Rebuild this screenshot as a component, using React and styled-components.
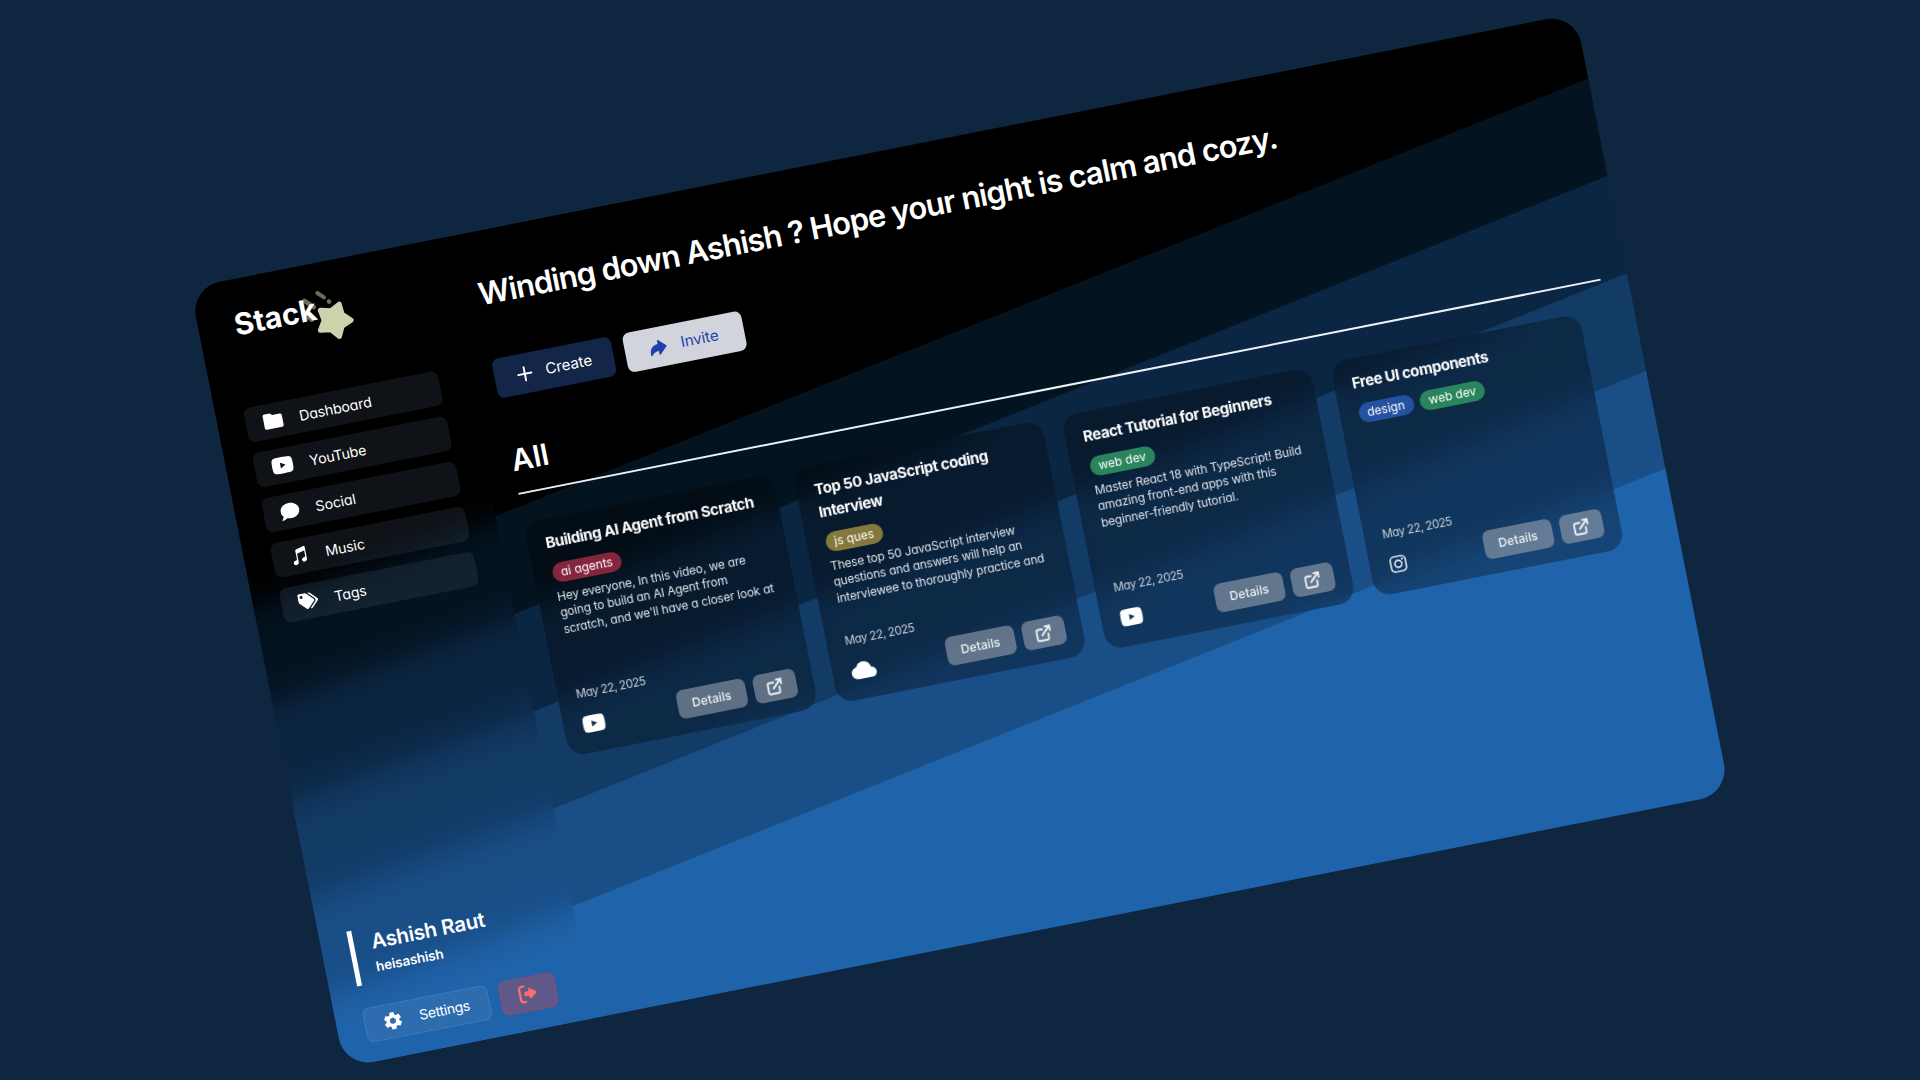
import React from "react";
import styled, { createGlobalStyle } from "styled-components";
import {
  IoMusicalNotes,
  IoArrowRedo,
  IoCloud,
  IoLogoInstagram,
} from "react-icons/io5";
import { IoMdSettings } from "react-icons/io";
import { FaTags, FaComment } from "react-icons/fa";
import { FiExternalLink, FiPlus } from "react-icons/fi";
import { MdFolder } from "react-icons/md";

const display = `"Inter", "Liberation Sans", sans-serif`;
const body = `"Inter", "Open Sans", sans-serif`;

const bands = [
  [0, 0, 0],
  [4, 19, 32],
  [11, 38, 67],
  [18, 59, 102],
  [25, 78, 135],
  [31, 99, 170],
];

const mix = (a, b, t) =>
  `rgb(${a.map((v, i) => Math.round(v + (b[i] - v) * t)).join(",")})`;

// Each band edge becomes a run of stops: [distance from the edge, share of the next band].
const bandGradient = (angle, first, step, falloff) =>
  `linear-gradient(${angle}deg, ${bands
    .slice(1)
    .flatMap((color, i) =>
      falloff.map(
        ([offset, share]) =>
          `${mix(bands[i], color, share)} ${(first + i * step + offset).toFixed(1)}px`
      )
    )
    .join(", ")})`;

const sharp = [
  [-0.5, 0],
  [0.5, 1],
];
const soft = [
  [-34, 0],
  [-24, 0.05],
  [-14, 0.17],
  [-7, 0.32],
  [0, 0.5],
  [7, 0.68],
  [14, 0.83],
  [24, 0.95],
  [34, 1],
];

const GlobalStyle = createGlobalStyle`
  * { box-sizing: border-box; margin: 0; padding: 0; }
  body {
    background: #0e2640;
    color: #fff;
    overflow: hidden;
    font-family: ${body};
    font-feature-settings: "cv11";
  }
  button { font-feature-settings: inherit; white-space: nowrap; }
`;

const Stage = styled.div`
  width: 100vw;
  height: 100vh;
  display: flex;
  align-items: center;
  justify-content: center;
  overflow: hidden;
`;

const Panel = styled.div`
  flex: none;
  display: flex;
  width: 1412px;
  height: 795px;
  border-radius: 30px;
  overflow: hidden;
  transform: rotate(-11.2deg);
  background: ${bandGradient(169.37, 325.6, 97.7, sharp)};
`;

const Sidebar = styled.aside`
  flex: none;
  display: flex;
  flex-direction: column;
  width: 255px;
  padding: 26px 29.5px 19px 28px;
  background: ${bandGradient(171.3, 323, 98.2, soft)};
`;

const Logo = styled.div`
  position: relative;
  height: 40px;
  margin-bottom: 63px;
`;

const LogoText = styled.span`
  position: relative;
  margin-left: 8px;
  font: 700 30px/38px ${display};
  letter-spacing: 0;
`;

const LogoStar = styled.svg`
  position: absolute;
  left: 67px;
  top: -6px;
  width: 66px;
  height: 66px;
`;

const Nav = styled.nav`
  display: flex;
  flex-direction: column;
  gap: 10.9px;
`;

const NavItem = styled.a`
  display: flex;
  align-items: center;
  gap: 16.5px;
  height: 35px;
  padding-left: 17px;
  border-radius: 7px;
  background: rgba(100, 120, 150, 0.15);
  font-size: 14.2px;
  letter-spacing: -0.1px;
`;

const FolderIcon = styled(MdFolder)`
  width: 23px;
  height: 23px;
  margin: 0 -1px 0 -1.5px;
`;

const Profile = styled.div`
  margin-top: auto;
  margin-bottom: 23px;
  height: 56px;
  padding: 1.5px 0 0 17.5px;
  border-left: 5px solid #fff;
`;

const ProfileName = styled.div`
  font: 600 20.5px/28px ${display};
  letter-spacing: -0.2px;
`;

const ProfileHandle = styled.div`
  font: 600 13.5px/22px ${display};
  letter-spacing: -0.15px;
`;

const SidebarFooter = styled.div`
  display: flex;
  gap: 10.5px;
`;

const SettingsButton = styled.button`
  display: flex;
  align-items: center;
  gap: 16.5px;
  flex: none;
  width: 127px;
  height: 35.5px;
  padding-left: 17px;
  border: 1px solid rgba(110, 160, 220, 0.3);
  border-radius: 7px;
  background: rgba(255, 255, 255, 0.06);
  color: #fff;
  font: 400 14px/20px ${body};
  letter-spacing: -0.3px;
`;

const LogoutButton = styled.button`
  display: flex;
  align-items: center;
  justify-content: center;
  flex: none;
  width: 57.5px;
  height: 35.5px;
  border: 1px solid rgba(200, 60, 85, 0.55);
  border-radius: 7px;
  background: #5e5989;
  color: #ff6b6b;
`;

const Main = styled.main`
  flex: 1;
  min-width: 0;
  display: flex;
  flex-direction: column;
  padding: 42.5px 27.5px 0 26.5px;
`;

const Greeting = styled.h1`
  font: 600 31px/40px ${display};
  letter-spacing: -0.9px;
  white-space: nowrap;
`;

const Actions = styled.div`
  display: flex;
  gap: 12.5px;
  margin: 46.5px 0 0 -0.5px;
`;

const ActionButton = styled.button`
  display: flex;
  align-items: center;
  justify-content: center;
  gap: ${(p) => (p.$light ? 13 : 10)}px;
  width: 120.5px;
  height: 40px;
  padding-right: 3px;
  border: 0;
  border-radius: 7px;
  background: ${(p) => (p.$light ? "#d1d5db" : "#132548")};
  color: ${(p) => (p.$light ? "#1e40af" : "#fff")};
  font: 400 15.2px/20px ${body};
  letter-spacing: -0.1px;
`;

const SectionTitle = styled.h2`
  margin-top: 44.5px;
  padding-bottom: 15.5px;
  border-bottom: 2px solid #eef2f6;
  font: 600 30px/36px ${display};
`;

const CardGrid = styled.div`
  display: grid;
  grid-template-columns: repeat(4, 1fr);
  gap: 20px;
  margin: 28px 27.5px 0 -0.5px;
`;

const Card = styled.article`
  display: flex;
  flex-direction: column;
  height: 239.3px;
  padding: 13px 17.5px 15px 18px;
  border-radius: 17px;
  background: rgba(0, 0, 0, 0.31);
  backdrop-filter: blur(15px);
`;

const CardTitle = styled.h3`
  font: 700 15px/23px ${display};
  letter-spacing: -0.43px;
  white-space: pre;
`;

const TagRow = styled.div`
  display: flex;
  gap: 6.5px;
  margin: 9.5px 0 0 0.5px;
`;

const tagColors = {
  "ai agents": "#85263f",
  "js ques": "#85773d",
  "web dev": "#2a855d",
  design: "#2552a0",
};

const Tag = styled.span`
  height: 20px;
  padding: 0 9px;
  border-radius: 10px;
  background: ${(p) => tagColors[p.$name]};
  font-size: 12px;
  line-height: 19.5px;
  white-space: nowrap;
`;

const Description = styled.p`
  height: 50px;
  margin: 6.5px 0 0 1px;
  overflow: hidden;
  color: #dde3ea;
  font-size: 11.8px;
  line-height: 16.4px;
  letter-spacing: -0.12px;
  white-space: pre;
`;

const CardFooter = styled.footer`
  display: flex;
  align-items: flex-end;
  justify-content: space-between;
  margin-top: auto;
`;

const Meta = styled.div`
  display: flex;
  flex-direction: column;
  gap: 12px;
  padding: 0 0 2.5px 0.5px;
`;

const DateText = styled.time`
  color: #c6cdd6;
  font-size: 11.5px;
  line-height: 16px;
  letter-spacing: -0.45px;
`;

const SourceIcon = styled.span`
  display: flex;
  align-items: center;
  height: 23px;
`;

const CardActions = styled.div`
  display: flex;
  gap: 8.5px;
`;

const CardButton = styled.button`
  display: flex;
  align-items: center;
  justify-content: center;
  width: ${(p) => (p.$icon ? 42.5 : 69.5)}px;
  height: 29px;
  border: 0;
  border-radius: 7px;
  background: rgba(156, 163, 175, 0.58);
  color: #eef2f6;
  font: 500 12px/16px ${body};
  letter-spacing: 0.1px;
`;

const YouTubeIcon = ({ size = 22 }) => (
  <svg width={size} height={size} viewBox="0 0 22 22" fill="currentColor">
    <path
      fillRule="evenodd"
      d="M11 2.8c3 0 5.6 0.1 7.3 0.3 1.5 0.2 2.6 1.2 2.9 2.7 0.3 1.7 0.4 3.4 0.4 5.2s-0.1 3.5-0.4 5.2c-0.3 1.5-1.4 2.5-2.9 2.7-1.7 0.2-4.3 0.3-7.3 0.3s-5.6-0.1-7.3-0.3C2.2 18.7 1.1 17.7 0.8 16.2 0.5 14.5 0.4 12.8 0.4 11s0.1-3.5 0.4-5.2C1.1 4.3 2.2 3.3 3.7 3.1 5.4 2.9 8 2.8 11 2.8zM8.9 8.1v5.8l5.2-2.9z"
    />
  </svg>
);

const LogoutIcon = () => (
  <svg width="22" height="22" viewBox="0 0 24 24" fill="none" stroke="currentColor" strokeLinecap="round" strokeLinejoin="round">
    <path d="M8.5 3.5H6.500a3 3 0 0 0-3 3v11a3 3 0 0 0 3 3h2" strokeWidth="2.6" />
    <path d="M9.5 10.6h5V7.500l6 4.500-6 4.500v-3.100h-5z" fill="currentColor" strokeWidth="2.4" />
  </svg>
);

const navItems = [
  { label: "Dashboard", icon: <FolderIcon /> },
  { label: "YouTube", icon: <YouTubeIcon size={22} /> },
  { label: "Social", icon: <FaComment size={19} /> },
  { label: "Music", icon: <IoMusicalNotes size={20} /> },
  { label: "Tags", icon: <FaTags size={20} /> },
];

const cards = [
  {
    title: "Building AI Agent from Scratch",
    tags: ["ai agents"],
    text: "Hey everyone, In this video, we are\ngoing to build an AI Agent from\nscratch, and we'll have a closer look at",
    icon: <YouTubeIcon size={23} />,
  },
  {
    title: "Top 50 JavaScript coding\nInterview",
    tags: ["js ques"],
    text: "These top 50 JavaScript interview\nquestions and answers will help an\ninterviewee to thoroughly practice and",
    icon: <IoCloud size={25} />,
  },
  {
    title: "React Tutorial for Beginners",
    tags: ["web dev"],
    text: "Master React 18 with TypeScript! Build\namazing front-end apps with this\nbeginner-friendly tutorial.",
    icon: <YouTubeIcon size={23} />,
  },
  {
    title: "Free UI components",
    tags: ["design", "web dev"],
    text: "",
    icon: <IoLogoInstagram size={19} />,
  },
];

export default function App() {
  return (
    <>
      <GlobalStyle />
      <Stage>
        <Panel>
          <Sidebar>
            <Logo>
              <LogoStar viewBox="95 20 66 66">
                <g stroke="#6b6d57" strokeLinecap="round" fill="none">
                  <path d="M123.6 29.9l5.7 5.6" strokeWidth="4" />
                  <path d="M133.4 40.4l0.2 0.2" strokeWidth="4.5" />
                  <path d="M109.5 35l8 8" strokeWidth="4.5" />
                  <path d="M106 48l7 7" strokeWidth="4.5" />
                </g>
                <path
                  d="M151.5 63.1L141.6 67.2 136.9 76.8 130 68.6 119.4 67.1 125 58 123.2 47.5 133.6 50 143 45 143.9 55.7z"
                  fill="#cdd1ac"
                  stroke="#cdd1ac"
                  strokeWidth="5"
                  strokeLinejoin="round"
                />
              </LogoStar>
              <LogoText>Stack</LogoText>
            </Logo>
            <Nav>
              {navItems.map((item) => (
                <NavItem key={item.label}>
                  {item.icon}
                  {item.label}
                </NavItem>
              ))}
            </Nav>
            <Profile>
              <ProfileName>Ashish Raut</ProfileName>
              <ProfileHandle>heisashish</ProfileHandle>
            </Profile>
            <SidebarFooter>
              <SettingsButton>
                <IoMdSettings size={21} />
                Settings
              </SettingsButton>
              <LogoutButton>
                <LogoutIcon />
              </LogoutButton>
            </SidebarFooter>
          </Sidebar>
          <Main>
            <Greeting>Winding down Ashish ? Hope your night is calm and cozy.</Greeting>
            <Actions>
              <ActionButton>
                <FiPlus size={23} />
                Create
              </ActionButton>
              <ActionButton $light>
                <IoArrowRedo size={21} />
                Invite
              </ActionButton>
            </Actions>
            <SectionTitle>All</SectionTitle>
            <CardGrid>
              {cards.map((card) => (
                <Card key={card.title}>
                  <CardTitle>{card.title}</CardTitle>
                  <TagRow>
                    {card.tags.map((tag) => (
                      <Tag key={tag} $name={tag}>
                        {tag}
                      </Tag>
                    ))}
                  </TagRow>
                  <Description>{card.text}</Description>
                  <CardFooter>
                    <Meta>
                      <DateText>May 22, 2025</DateText>
                      <SourceIcon>{card.icon}</SourceIcon>
                    </Meta>
                    <CardActions>
                      <CardButton>Details</CardButton>
                      <CardButton $icon>
                        <FiExternalLink size={18} strokeWidth={2.4} />
                      </CardButton>
                    </CardActions>
                  </CardFooter>
                </Card>
              ))}
            </CardGrid>
          </Main>
        </Panel>
      </Stage>
    </>
  );
}
